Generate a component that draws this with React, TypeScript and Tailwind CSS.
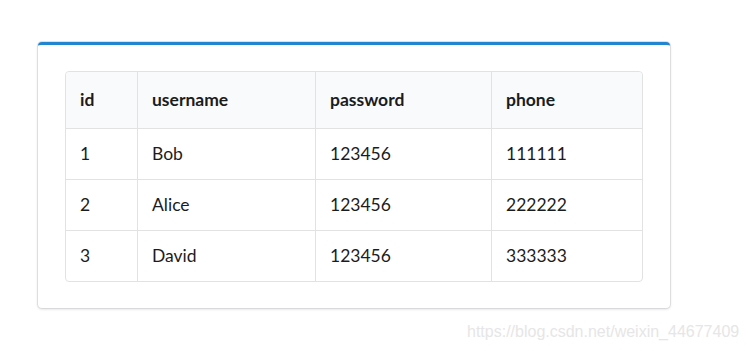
import React from 'react';

type Utilisateur = {
  id: number;
  username: string;
  password: string;
  phone: string;
};

const utilisateurs: Utilisateur[] = [
  { id: 1, username: 'Bob', password: '123456', phone: '111111' },
  { id: 2, username: 'Alice', password: '123456', phone: '222222' },
  { id: 3, username: 'David', password: '123456', phone: '333333' }
];

const colonnes = ['id', 'username', 'password', 'phone'];
const largeurs = ['w-[71px]', 'w-[178px]', 'w-[176px]', 'w-[151px]'];

const App: React.FC = () => {
  return (
    <div className="relative w-[748px] h-[351px] bg-white font-['Lato',sans-serif] text-[17.5px] text-[#1b1c1d]">
      {/* Carte */}
      <div className="absolute left-[38px] top-[42px] w-[632px] rounded-[4px] border-t-[3px] border-t-[#2185d0] bg-white shadow-[0_1px_3px_0_#d4d4d5,0_0_0_1px_#e3e3e4] px-[27px] pt-[26px] pb-[26px]">
        <table className="w-[577px] table-fixed border-separate border-spacing-0 rounded-[4px] border border-[#e2e2e3]">
          <thead>
            <tr className="h-[56px]">
              {colonnes.map((c, i) => (
                <th
                  key={c}
                  className={`${largeurs[i]} bg-[#f9fafb] px-[14px] text-left font-bold ${i === 0 ? 'rounded-tl-[4px]' : 'border-l border-[#e2e2e3]'} ${i === 3 ? 'rounded-tr-[4px]' : ''}`}
                >
                  {c}
                </th>
              ))}
            </tr>
          </thead>
          <tbody>
            {utilisateurs.map((u) => (
              <tr key={u.id} className="h-[51px]">
                <td className="border-t border-[#e2e2e3] px-[14px]">{u.id}</td>
                <td className="border-t border-l border-[#e2e2e3] px-[14px]">{u.username}</td>
                <td className="border-t border-l border-[#e2e2e3] px-[14px]">{u.password}</td>
                <td className="border-t border-l border-[#e2e2e3] px-[14px]">{u.phone}</td>
              </tr>
            ))}
          </tbody>
        </table>
      </div>

      {/* Filigrane */}
      <div className="absolute left-[467px] top-[320px] font-['Liberation_Sans',Arial,sans-serif] text-[16px] text-[#e6e6e6]">
        https://blog.csdn.net/weixin_44677409
      </div>
    </div>
  );
};

export default App;
